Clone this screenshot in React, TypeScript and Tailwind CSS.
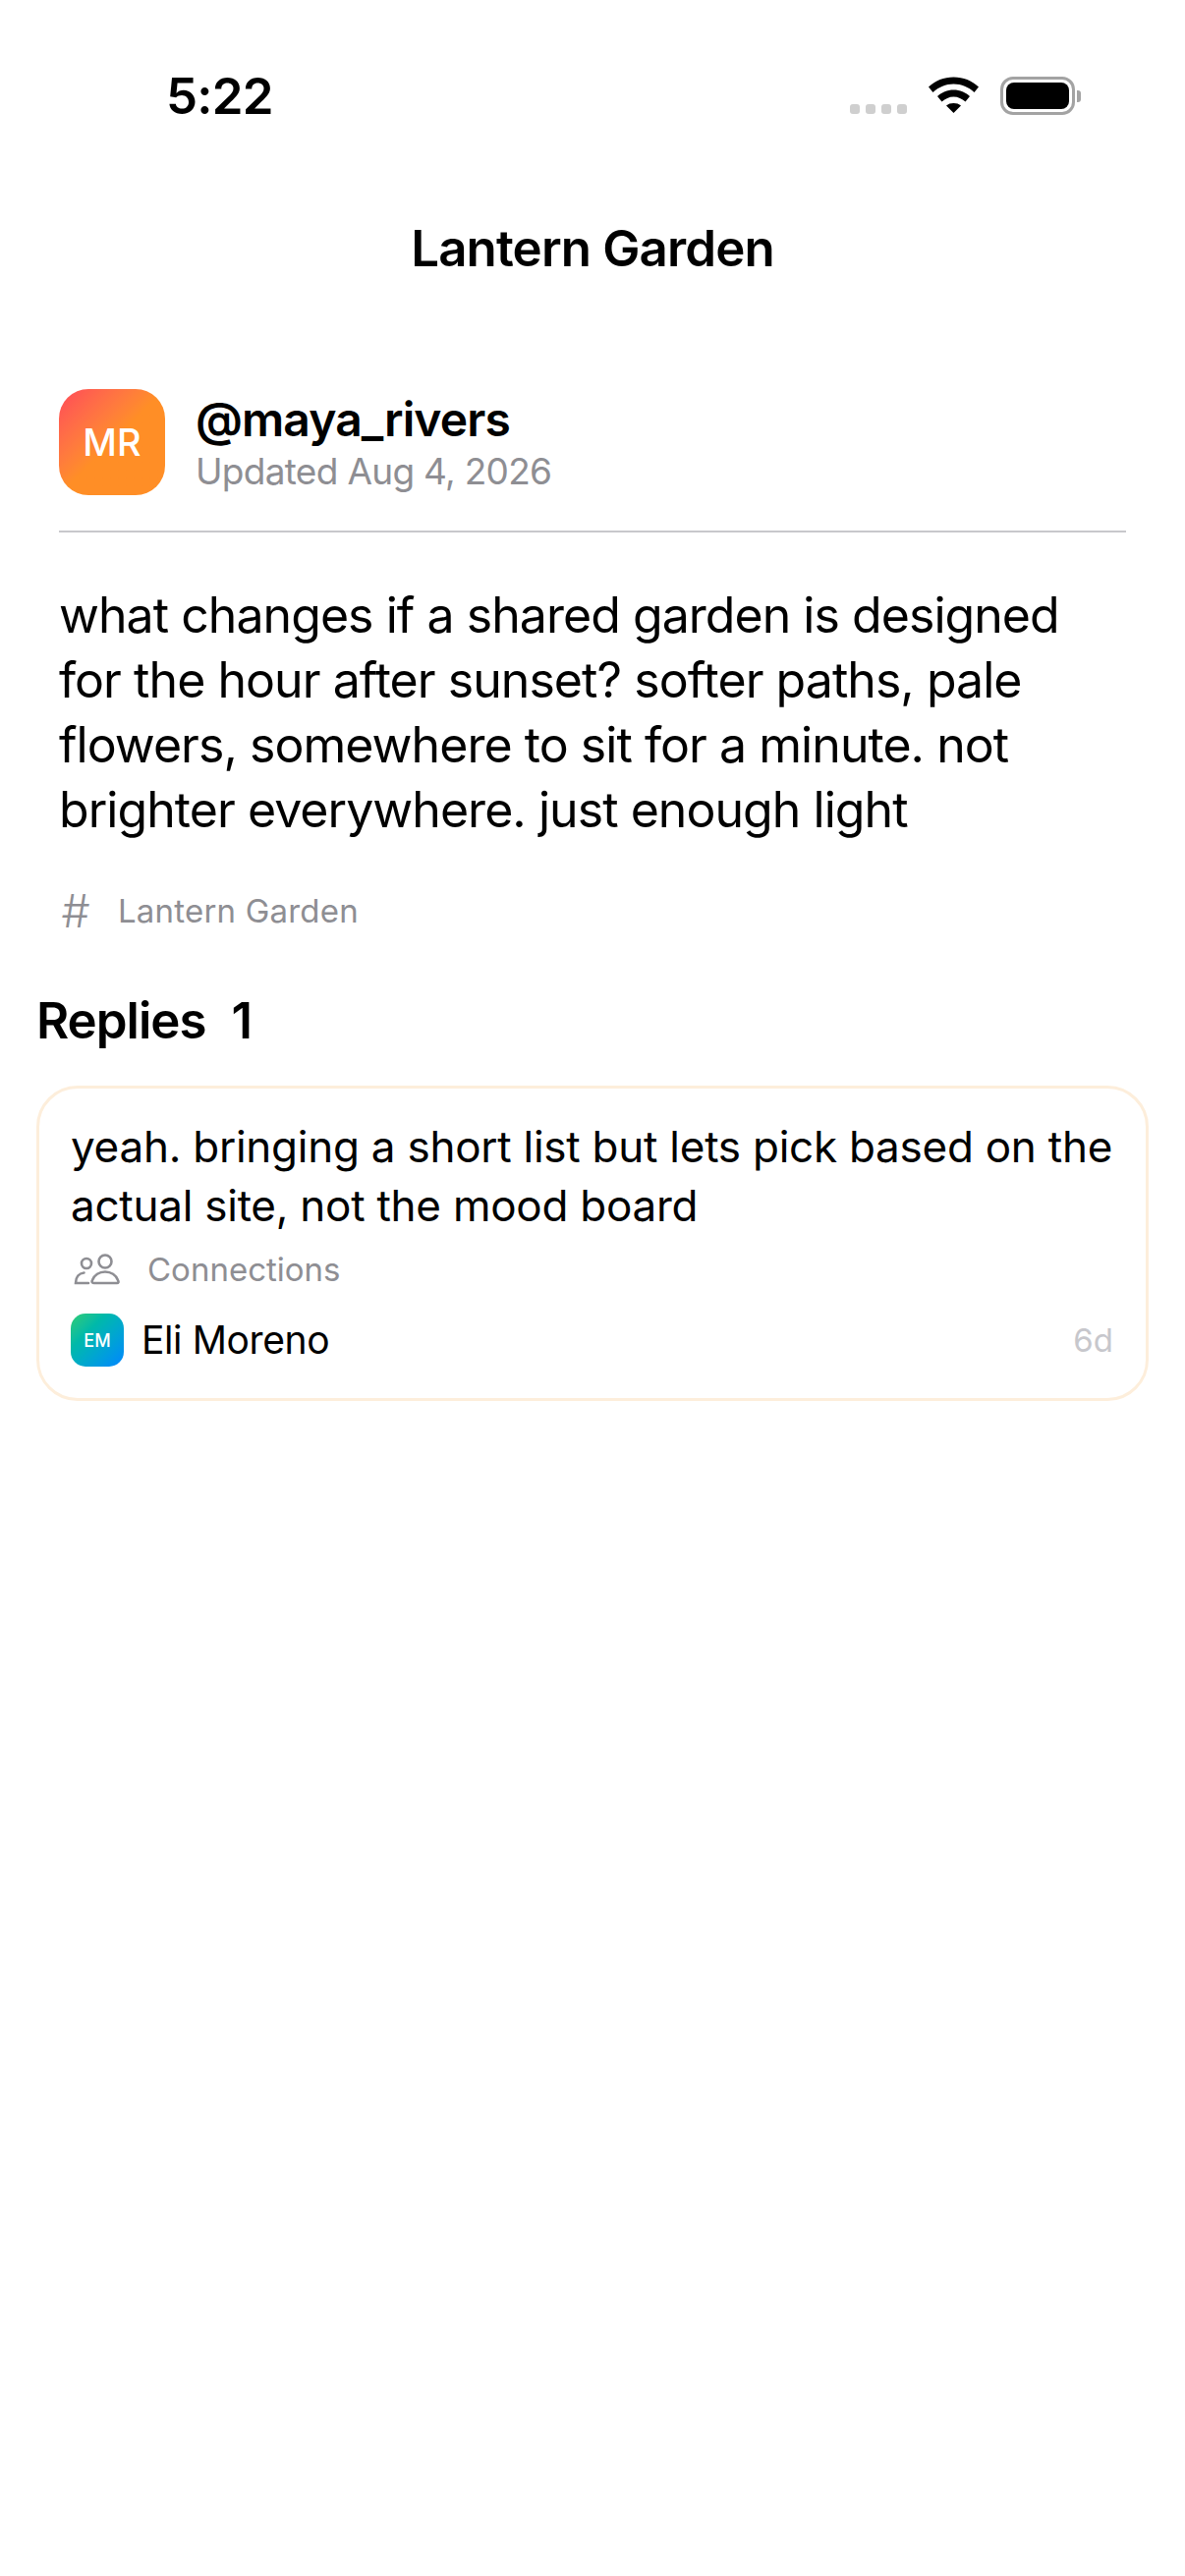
import React from 'react';

function Wifi() {
  return (
    <svg className="w-[51px] h-[37px]" viewBox="0 0 51 37" fill="none">
      <path d="M0 10.5C7 4 15.5 0.5 25.5 0.5S44 4 51 10.5L46.5 16C40.5 10.5 33.5 7.5 25.5 7.5S10.5 10.5 4.5 16Z" fill="#000" />
      <path d="M9 20C13.5 16 19 13.5 25.5 13.5S37.5 16 42 20L37.5 25.5C34 22.5 30 20.5 25.5 20.5S17 22.5 13.5 25.5Z" fill="#000" />
      <path d="M18 29.5C20 27.8 22.5 27 25.5 27S31 27.8 33 29.5L25.5 37Z" fill="#000" />
    </svg>
  );
}

function Battery() {
  return (
    <div className="flex items-center">
      <div className="w-[76px] h-[39px] rounded-[13px] border-[3px] border-[#a3a3a3] p-[3px]">
        <div className="w-full h-full rounded-[8px] bg-black" />
      </div>
      <div className="w-[4px] h-[12px] rounded-r-[3px] bg-[#a3a3a3] ml-[2px]" />
    </div>
  );
}

function StatusBar() {
  return (
    <div className="h-[194px] flex justify-between items-start pl-[169px] pr-[106px] pt-[68px]">
      <div className="text-[51px] leading-[60px] font-semibold tracking-[-0.8px] text-black">5:22</div>
      <div className="flex items-start mt-[10px]">
        <div className="flex gap-[6px] mt-[28px] mr-[22px]">
          {[0, 1, 2, 3].map((i) => (
            <div key={i} className="w-[10px] h-[10px] rounded-[3px] bg-[#cfcfcf]" />
          ))}
        </div>
        <div className="mr-[22px]">
          <Wifi />
        </div>
        <Battery />
      </div>
    </div>
  );
}

function PeopleIcon() {
  return (
    <svg className="w-[47px] h-[32px] ml-[3px]" viewBox="0 0 47 32" fill="none" stroke="#8e8e93" strokeWidth="2.6" strokeLinecap="round">
      <circle cx="13" cy="10" r="5" />
      <circle cx="32" cy="8" r="6.5" />
      <path d="M15 30H2C2 24 5.5 20 10.5 19.5" />
      <path d="M21 30H44C45.5 30 46 29 45 27C43 22 38 18.5 32 18.5S21 22 19 27C18 29 19 30 21 30Z" />
    </svg>
  );
}

export default function App() {
  return (
    <div className="w-[1206px] h-[2622px] bg-white overflow-hidden font-['Inter',sans-serif]">
      <StatusBar />
      <div className="h-[118px] text-center text-[51px] leading-[118px] font-semibold tracking-[-0.85px] text-black">
        Lantern Garden
      </div>

      <div className="px-[60px] pt-[84px]">
        <div className="flex items-center gap-[31px] pb-[36px] border-b-[2px] border-[#c8c8cc]">
          <div className="w-[108px] h-[108px] rounded-[30px] bg-gradient-to-br from-[#ff4757] via-[#ff8e26] via-50% to-[#ff8e26] flex items-center justify-center text-white text-[38px] font-medium">
            MR
          </div>
          <div>
            <div className="text-[48px] leading-[58px] font-semibold tracking-[-0.9px] text-black">@maya_rivers</div>
            <div className="mt-[1px] text-[37px] leading-[46px] tracking-[-0.7px] text-[#8e8e93]">Updated Aug 4, 2026</div>
          </div>
        </div>

        <p className="mt-[51px] text-[50px] leading-[66px] tracking-[-0.95px] text-black">
          what changes if a shared garden is designed for the hour after sunset? softer paths, pale
          flowers, somewhere to sit for a minute. not brighter everywhere. just enough light
        </p>

        <div className="mt-[46px] flex items-center gap-[26px] text-[#8e8e93]">
          <span className="w-[34px] text-[46px] leading-[48px] font-light text-center">#</span>
          <span className="text-[33px] leading-[48px] tracking-[0.2px]">Lantern Garden</span>
        </div>
      </div>

      <div className="px-[37px] mt-[53px]">
        <div className="text-[51px] leading-[70px] font-semibold tracking-[-1px] text-black flex gap-[26px]">
          <span>Replies</span>
          <span>1</span>
        </div>
        <div className="mt-[31px] h-[321px] rounded-[42px] border-[3px] border-[#fdeedb] px-[32px] pt-[29px]">
          <p className="text-[44px] leading-[60px] tracking-[-0.25px] text-black">
            yeah. bringing a short list but lets pick based on the actual site, not the mood board
          </p>
          <div className="mt-[13px] flex items-center gap-[28px]">
            <PeopleIcon />
            <span className="text-[33px] leading-[44px] text-[#8e8e93]">Connections</span>
          </div>
          <div className="mt-[23px] flex items-center">
            <div className="w-[54px] h-[54px] rounded-[15px] bg-gradient-to-br from-[#2ecc71] to-[#0a84ff] flex items-center justify-center text-white text-[18px] font-medium">
              EM
            </div>
            <span className="ml-[18px] text-[39px] leading-[54px] tracking-[-0.4px] text-black">Eli Moreno</span>
            <span className="ml-auto mr-[1px] text-[33px] leading-[54px] text-[#c7c7cc]">6d</span>
          </div>
        </div>
      </div>
    </div>
  );
}
